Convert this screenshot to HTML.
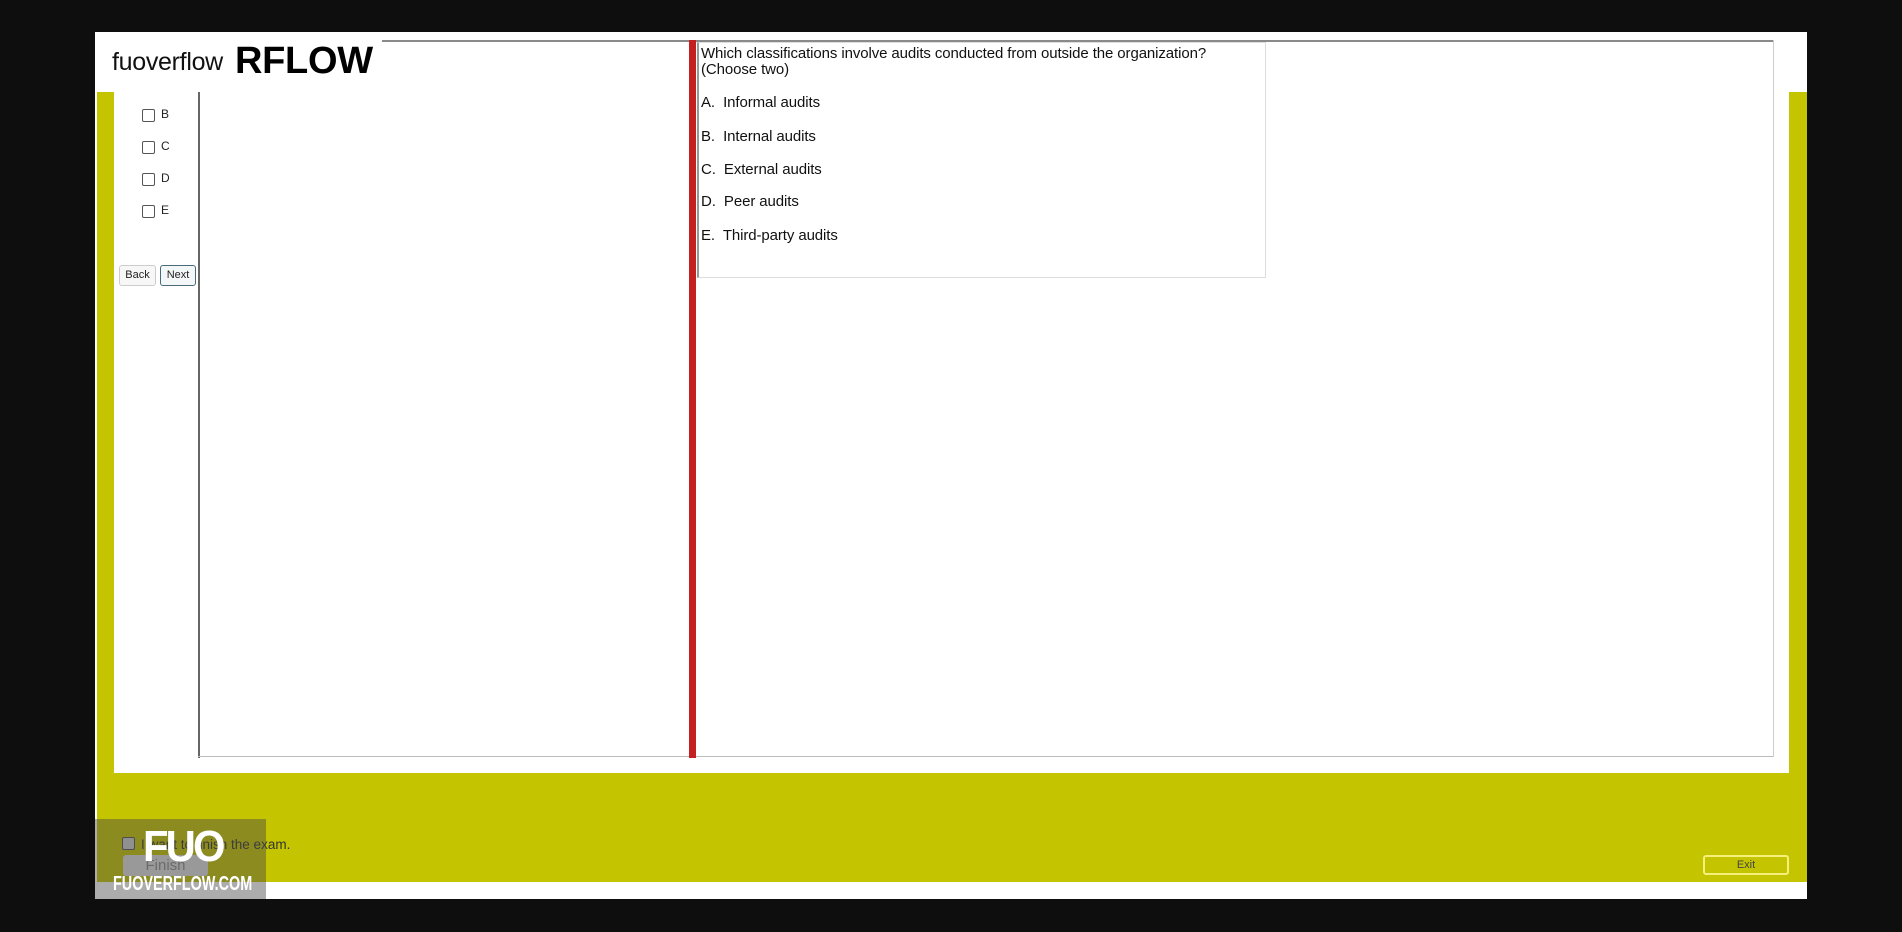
<!DOCTYPE html>
<html><head><meta charset="utf-8"><style>
*{margin:0;padding:0;box-sizing:border-box}
body{width:1902px;height:932px;background:#0e0e0e;position:relative;overflow:hidden;font-family:"Liberation Sans",Arial,sans-serif}
.a{position:absolute}
.cb{position:absolute;width:13px;height:13px;border:1px solid #555;border-radius:2px;background:#fff}
.lbl{position:absolute;font-size:12px;color:#222}
.q{position:absolute;left:701px;font-size:15px;color:#111;white-space:nowrap;letter-spacing:-0.1px}
</style></head><body>
<div class="a" style="left:95px;top:32px;width:1712px;height:867px;background:#fff"></div>
<div class="a" style="left:97px;top:92px;width:1710px;height:790px;background:#c4c400"></div>
<div class="a" style="left:114px;top:32px;width:1675px;height:741px;background:#fff"></div>
<!-- header -->
<div class="a" style="left:112px;top:48px;font-size:25px;color:#111;letter-spacing:-0.3px">fuoverflow</div>
<div class="a" style="left:235px;top:40px;font-size:38px;font-weight:bold;color:#000;letter-spacing:-0.3px">RFLOW</div>
<!-- top line -->
<div class="a" style="left:382px;top:40px;width:1392px;height:2px;background:#8a8a8a"></div>
<!-- left vertical line -->
<div class="a" style="left:198px;top:92px;width:2px;height:666px;background:#666"></div>
<div class="a" style="left:198px;top:756px;width:1576px;height:1px;background:#bbb"></div>
<div class="a" style="left:1773px;top:40px;width:1px;height:717px;background:#ccc"></div>
<!-- checkboxes -->
<div class="cb" style="left:142px;top:109px"></div><div class="lbl" style="left:161px;top:107px">B</div>
<div class="cb" style="left:142px;top:141px"></div><div class="lbl" style="left:161px;top:139px">C</div>
<div class="cb" style="left:142px;top:173px"></div><div class="lbl" style="left:161px;top:171px">D</div>
<div class="cb" style="left:142px;top:205px"></div><div class="lbl" style="left:161px;top:203px">E</div>
<div class="a" style="left:119px;top:265px;width:37px;height:21px;border:1px solid #ccc;border-radius:3px;background:#f7f7f7;font-size:11px;text-align:center;line-height:19px;color:#222">Back</div>
<div class="a" style="left:160px;top:265px;width:36px;height:21px;border:1px solid #4a6a7a;border-radius:3px;background:#f4f7f8;font-size:11px;text-align:center;line-height:19px;color:#222">Next</div>
<!-- red bar -->
<div class="a" style="left:689px;top:40px;width:7px;height:718px;background:#c42020"></div>
<!-- question box -->
<div class="a" style="left:697px;top:42px;width:569px;height:236px;border:1px solid #ddd;border-left:2px solid #999"></div>
<div class="q" style="top:45px">Which classifications involve audits conducted from outside the organization?</div>
<div class="q" style="top:61px">(Choose two)</div>
<div class="q" style="top:94px">A.&nbsp; Informal audits</div>
<div class="q" style="top:128px">B.&nbsp; Internal audits</div>
<div class="q" style="top:161px">C.&nbsp; External audits</div>
<div class="q" style="top:193px">D.&nbsp; Peer audits</div>
<div class="q" style="top:227px">E.&nbsp; Third-party audits</div>
<!-- bottom -->
<div class="cb" style="left:122px;top:837px;background:#ccc"></div>
<div class="a" style="left:141px;top:837px;font-size:13.5px;color:#333">I want to finish the exam.</div>
<div class="a" style="left:123px;top:855px;width:85px;height:21px;background:#ddd;border-radius:3px;font-size:15px;color:#888;text-align:center;line-height:21px">Finish</div>
<div class="a" style="left:1703px;top:855px;width:86px;height:20px;border:2px solid #f4f07a;border-radius:3px;font-size:11px;color:#444;text-align:center;line-height:16px">Exit</div>
<!-- watermark -->
<div class="a" style="left:95px;top:819px;width:171px;height:80px;background:rgba(70,70,70,0.45)"></div>
<div class="a" style="left:143px;top:822px;font-size:44px;font-weight:bold;color:#fff;letter-spacing:-3px;transform:scaleX(0.95);transform-origin:left">FUO</div>
<div class="a" style="left:113px;top:873px;font-size:20px;font-weight:bold;color:#fff;transform:scaleX(0.72);transform-origin:left;white-space:nowrap">FUOVERFLOW.COM</div>
</body></html>
